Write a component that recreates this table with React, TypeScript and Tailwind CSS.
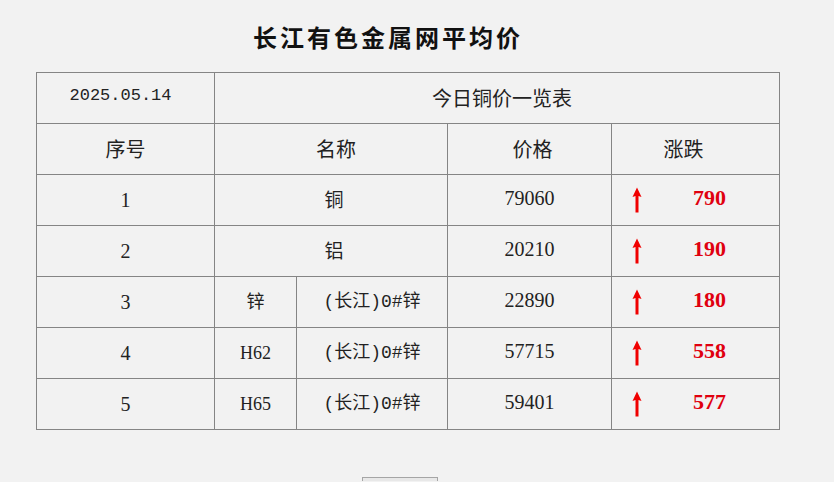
const rows = [
  { no: 1, name: '铜', price: '79060', diff: '790' },
  { no: 2, name: '铝', price: '20210', diff: '190' },
  { no: 3, sub: '锌', name: '(长江)0#锌', price: '22890', diff: '180' },
  { no: 4, sub: 'H62', name: '(长江)0#锌', price: '57715', diff: '558' },
  { no: 5, sub: 'H65', name: '(长江)0#锌', price: '59401', diff: '577' },
]

function UpArrow() {
  return (
    <svg width="10" height="26" viewBox="0 0 10 26" className="shrink-0">
      <path d="M5 0.5 L9.5 10 L6.5 9 L6.5 25.5 L3.5 25.5 L3.5 9 L0.5 10 Z" fill="#f00000" />
    </svg>
  )
}

const cell = 'border border-[#858585] text-center align-middle p-0 h-[51px]'

export default function App() {
  return (
    <div className="min-h-[482px] bg-[#f2f2f2] text-[#222]" style={{ fontFamily: '"Liberation Serif", "Noto Sans CJK SC", serif' }}>
      {/* 标题 */}
      <h1 className="pt-[21px] pl-[253px] text-[24px] leading-[32px] font-bold tracking-[3px] text-[#111] [font-family:'Noto_Sans_CJK_SC',serif]">
        长江有色金属网平均价
      </h1>

      <table className="mt-[19px] ml-[36px] w-[743px] table-fixed border-collapse">
        <colgroup>
          <col className="w-[178px]" />
          <col className="w-[82px]" />
          <col className="w-[151px]" />
          <col className="w-[164px]" />
          <col className="w-[168px]" />
        </colgroup>
        <tbody>
          <tr>
            <td className={`${cell} pr-[10px] pb-[4px] text-[17px] [font-family:'Liberation_Mono',monospace]`}>2025.05.14</td>
            <td colSpan={4} className={`${cell} pl-[10px] text-[20px] [font-family:'Noto_Sans_CJK_SC',sans-serif]`}>
              今日铜价一览表
            </td>
          </tr>
          <tr className="text-[20px] [font-family:'Noto_Sans_CJK_SC',sans-serif]">
            <td className={cell}>序号</td>
            <td colSpan={2} className={`${cell} pl-[10px]`}>名称</td>
            <td className={`${cell} pl-[6px]`}>价格</td>
            <td className={`${cell} pr-[24px]`}>涨跌</td>
          </tr>
          {rows.map((r) => (
            <tr key={r.no}>
              <td className={`${cell} text-[20px]`}>{r.no}</td>
              {r.sub ? (
                <>
                  <td className={`${cell} text-[18px] [font-family:'Liberation_Serif','Noto_Sans_CJK_SC',serif]`}>{r.sub}</td>
                  <td className={`${cell} text-[18px] [font-family:'Liberation_Mono','Noto_Sans_CJK_SC',monospace]`}>{r.name}</td>
                </>
              ) : (
                <td colSpan={2} className={`${cell} pl-[6px] pb-[2px] text-[19px] [font-family:'Noto_Sans_CJK_SC',sans-serif]`}>{r.name}</td>
              )}
              <td className={`${cell} pb-[5px] text-[20px]`}>{r.price}</td>
              <td className={cell}>
                <div className="flex items-center pl-[20px]">
                  <UpArrow />
                  <span className="ml-[51px] pb-[6px] text-[22px] font-bold text-[#e0000f]">{r.diff}</span>
                </div>
              </td>
            </tr>
          ))}
        </tbody>
      </table>

      <div className="mt-[47px] flex h-[4px] overflow-hidden pl-[362px]">
        <div className="h-[30px] w-[76px] shrink-0 border border-[#a5a5a5] bg-[#e8e8e8]" />
      </div>
    </div>
  )
}
